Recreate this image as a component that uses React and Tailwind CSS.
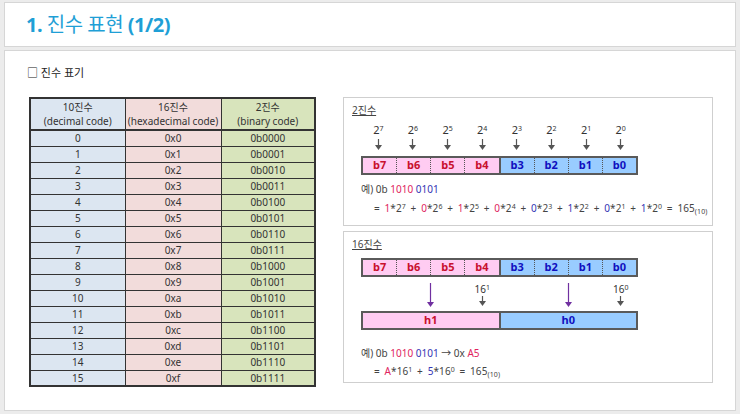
const font = { fontFamily: "'Noto Sans', 'Noto Sans CJK KR', sans-serif" };

const rows = Array.from({ length: 16 }, (_, i) => [
  String(i),
  "0x" + i.toString(16),
  "0b" + i.toString(2).padStart(4, "0"),
]);

const bits = ["b7", "b6", "b5", "b4", "b3", "b2", "b1", "b0"];

function DownArrow({ h = 11, color = "#555", w = 7 }) {
  return (
    <svg width={w} height={h} viewBox={`0 0 ${w} ${h}`} className="block">
      <line x1={w / 2} y1="0" x2={w / 2} y2={h - 4} stroke={color} strokeWidth="1.2" />
      <polygon points={`0,${h - 5} ${w},${h - 5} ${w / 2},${h}`} fill={color} />
    </svg>
  );
}

function BitBar() {
  return (
    <div className="flex w-[277px] h-[19px] border-2 border-[#5a5a5a]">
      {bits.map((b, i) => (
        <div
          key={b}
          className={
            "flex-1 flex items-center justify-center text-[11px] font-bold " +
            (i < 4 ? "bg-[#ffccf2] text-[#c8102e] " : "bg-[#99ccff] text-[#1010c0] ") +
            (i === 0 ? "" : i === 4 ? "border-l-2 border-[#5a5a5a]" : "border-l border-dotted border-[#555]")
          }
        >
          {b}
        </div>
      ))}
    </div>
  );
}

const R = ({ children }) => <span className="text-[#e0245e]">{children}</span>;
const B = ({ children }) => <span className="text-[#3434b4]">{children}</span>;
const S = ({ children }) => <sup className="text-[7px]">{children}</sup>;

export default function App() {
  return (
    <div style={font} className="w-[740px] h-[414px] bg-[#ececec] px-[4px] pt-[2px] pb-[3px] flex flex-col gap-[3px] overflow-hidden">
      {/* header */}
      <div className="h-[45px] shrink-0 bg-white border border-[#d6d6d6] flex items-center pl-[21px]">
        <h1 className="text-[20px] text-[#1f9fd6] tracking-tight">
          <span className="font-bold">1.</span> 진수 표현 <span className="font-bold">(1/2)</span>
        </h1>
      </div>

      {/* content */}
      <div className="flex-1 bg-white border border-[#d6d6d6] pl-[22px] pt-[16px]">
        <p className="text-[11px] text-[#222] leading-none">□ 진수 표기</p>

        <div className="flex gap-[27px] mt-[19px] ml-[2px]">
          {/* table */}
          <table className="w-[287px] border-collapse border-2 border-[#333] text-[10px] text-[#333] text-center leading-none">
            <thead>
              <tr className="h-[32px] border-b-2 border-[#333]">
                <th className="font-normal bg-[#dce6f1] border border-[#333] leading-[14px]">10진수<br />(decimal code)</th>
                <th className="font-normal bg-[#f2dcdb] border border-[#333] leading-[14px]">16진수<br />(hexadecimal code)</th>
                <th className="font-normal bg-[#d8e4bc] border border-[#333] leading-[14px]">2진수<br />(binary code)</th>
              </tr>
            </thead>
            <tbody>
              {rows.map((r) => (
                <tr key={r[0]} className="h-[16px]">
                  <td className="bg-[#dce6f1] border border-[#333] w-[95px]">{r[0]}</td>
                  <td className="bg-[#f2dcdb] border border-[#333] w-[96px]">{r[1]}</td>
                  <td className="bg-[#d8e4bc] border border-[#333]">{r[2]}</td>
                </tr>
              ))}
            </tbody>
          </table>

          {/* diagrams */}
          <div className="flex flex-col gap-[5px] w-[370px]">
            <div className="h-[129px] border border-[#cfcfcf] px-[8px] pt-[5px] text-[#444]">
              <p className="text-[10px] underline leading-[14px]">2진수</p>
              <div className="flex w-[277px] ml-[9px] mt-[6px]">
                {[7, 6, 5, 4, 3, 2, 1, 0].map((p) => (
                  <div key={p} className="flex-1 flex flex-col items-center">
                    <span className="text-[11px] leading-[13px] text-[#333]">
                      2<S>{p}</S>
                    </span>
                    <div className="mt-[3px]">
                      <DownArrow h={11} />
                    </div>
                  </div>
                ))}
              </div>
              <div className="ml-[9px] mt-[6px]">
                <BitBar />
              </div>
              <p className="text-[10px] ml-[9px] mt-[7px] leading-[14px]">
                예) 0b <R>1010</R> <B>0101</B>
              </p>
              <p className="text-[10px] ml-[22px] mt-[6px] leading-[12px] whitespace-nowrap tracking-[0.1px] [word-spacing:2px]">
                = <R>1</R>*2<S>7</S> + <R>0</R>*2<S>6</S> + <R>1</R>*2<S>5</S> + <R>0</R>*2<S>4</S> + <B>0</B>*2<S>3</S> + <B>1</B>*2<S>2</S> + <B>0</B>*2<S>1</S> + <B>1</B>*2<S>0</S> = 165<sub className="text-[7px]">(10)</sub>
              </p>
            </div>

            <div className="h-[152px] border border-[#cfcfcf] px-[8px] pt-[5px] text-[#444]">
              <p className="text-[10px] underline leading-[14px]">16진수</p>
              <div className="ml-[9px] mt-[7px]">
                <BitBar />
              </div>
              <div className="flex w-[277px] ml-[9px] mt-[6px] h-[27px]">
                {["1", "0"].map((n) => (
                  <div key={n} className="flex-1 grid grid-cols-4">
                    <div className="col-start-2 col-span-2 flex justify-center">
                      <DownArrow h={24} color="#7030a0" />
                    </div>
                    <div className="col-start-4 flex flex-col items-center">
                      <span className="text-[10px] leading-[12px] text-[#333]">
                        16<S>{n}</S>
                      </span>
                      <div className="mt-[1px]">
                        <DownArrow h={10} />
                      </div>
                    </div>
                  </div>
                ))}
              </div>
              <div className="flex w-[277px] h-[19px] ml-[9px] mt-[1px] border-2 border-[#5a5a5a] text-[11px] font-bold">
                <div className="flex-1 bg-[#ffccf2] text-[#c8102e] flex items-center justify-center">h1</div>
                <div className="flex-1 bg-[#99ccff] text-[#1010c0] flex items-center justify-center border-l-2 border-[#5a5a5a]">h0</div>
              </div>
              <p className="text-[10px] ml-[9px] mt-[16px] leading-[14px]">
                예) 0b <R>1010</R> <B>0101</B> → 0x <R>A5</R>
              </p>
              <p className="text-[10px] ml-[22px] mt-[5px] leading-[12px] whitespace-nowrap tracking-[0.1px] [word-spacing:2px]">
                = <R>A</R>*16<S>1</S> + <B>5</B>*16<S>0</S> = 165<sub className="text-[7px]">(10)</sub>
              </p>
            </div>
          </div>
        </div>
      </div>
    </div>
  );
}
